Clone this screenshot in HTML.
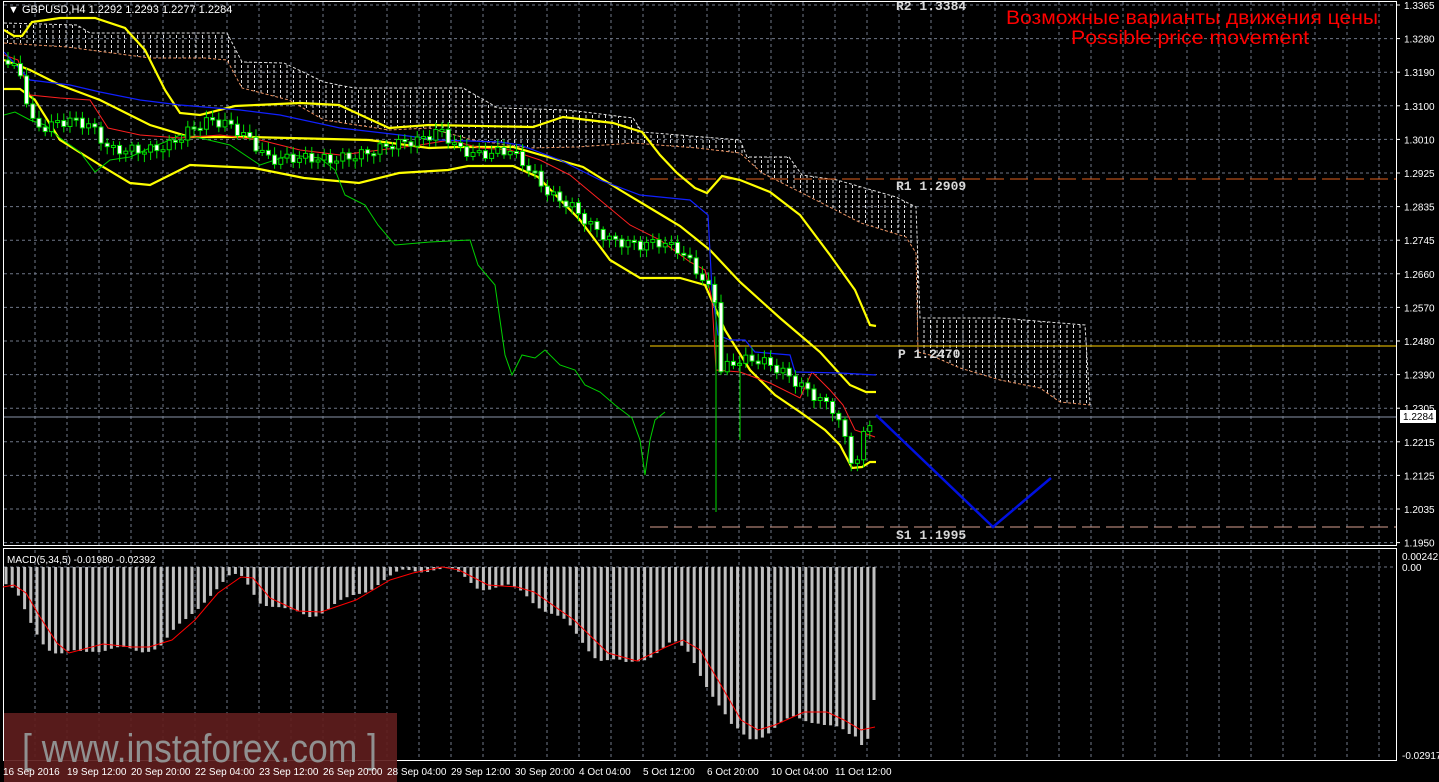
<!DOCTYPE html>
<html><head><meta charset="utf-8"><style>
html,body{margin:0;padding:0;background:#000;width:1439px;height:782px;overflow:hidden}
svg{display:block}
text{font-family:"Liberation Sans",sans-serif}
text.mono{font-family:"Liberation Mono",monospace}
</style></head><body>
<svg id="s" width="1439" height="782" viewBox="0 0 1439 782" xmlns="http://www.w3.org/2000/svg">
<defs>
<pattern id="hatch" width="6.5" height="5" patternUnits="userSpaceOnUse">
<line x1="1" y1="0" x2="1" y2="3" stroke="#e0e0e0" stroke-width="1"/>
</pattern>
<clipPath id="mc"><rect x="4" y="2" width="1393" height="543"/></clipPath>
</defs>
<g id="grid"></g>
<g clip-path="url(#mc)">
<polygon fill="url(#hatch)" points="4,23 77,25 90,33 227,33 242,62 284,63 324,82 354,88 463,88 498,108 568,110 633,118 642,132 740,140 747,157 789,157 802,175 837,180 896,197 916,207 920,318 1000,318 1085,325 1090,405 1060,402 1040,388 1000,380 960,368 930,355 918,352 916,253 906,237 861,223 802,193 762,173 740,153 697,148 633,143 578,147 528,148 473,140 429,128 389,130 324,120 289,100 242,88 227,60 205,58 150,58 67,47 4,43"/>
<polyline fill="none" stroke="#e89060" stroke-dasharray="3,2" points="4,43 67,47 150,58 205,58 227,60 242,88 289,100 324,120 389,130 429,128 473,140 528,148 578,147 633,143 697,148 740,153 762,173 802,193 861,223 906,237 916,253 918,352 930,355 960,368 1000,380 1040,388 1060,402 1090,405"/>
<polyline fill="none" stroke="#e0e0e0" stroke-dasharray="3,2" points="4,23 77,25 90,33 227,33 242,62 284,63 324,82 354,88 463,88 498,108 568,110 633,118 642,132 740,140 747,157 789,157 802,175 837,180 896,197 916,207 920,318 1000,318 1085,325 1090,405"/>
</g>
<line x1="650" y1="179" x2="1396" y2="179" stroke="#e0601e" stroke-dasharray="18,6"/>
<line x1="650" y1="346" x2="1396" y2="346" stroke="#ffd000"/>
<line x1="650" y1="527" x2="1396" y2="527" stroke="#d8a090" stroke-dasharray="18,6"/>
<line x1="4" y1="417" x2="1396" y2="417" stroke="#8a94a8"/>
<g font-size="13" font-weight="bold" fill="#d8d8d8">
<text class="mono" x="896" y="10">R2 1.3384</text>
<text class="mono" x="896" y="190">R1 1.2909</text>
<text class="mono" x="898" y="358">P 1.2470</text>
<text class="mono" x="896" y="539">S1 1.1995</text>
</g>
<g id="lines" clip-path="url(#mc)" fill="none">
<polyline stroke="#ffff00" stroke-width="2.2" points="4,30 14,36 22,36 32,22 60,18 95,18 125,28 145,50 165,90 180,113 200,115 235,106 300,103 339,105 389,128 429,125 533,127 563,117 613,123 642,132 660,155 677,173 695,188 707,193 722,176 740,180 770,192 800,215 830,255 855,290 870,325 876,326"/>
<polyline stroke="#ffff00" stroke-width="2.2" points="4,60 30,70 60,85 100,100 150,125 190,137 250,137 369,140 429,148 458,147 513,147 583,167 620,190 650,208 680,226 710,250 740,282 780,318 820,352 850,385 866,392 876,392"/>
<polyline stroke="#ffff00" stroke-width="2.2" points="4,89 20,89 35,100 60,140 100,165 130,183 150,185 190,165 254,168 304,178 359,183 399,173 448,170 468,166 513,166 538,177 580,220 610,260 640,278 680,278 705,285 725,330 750,370 775,395 800,412 825,430 840,445 852,468 862,467 870,462 876,462"/>
<polyline stroke="#00d000" stroke-width="1" points="4,115 15,112 30,120 45,125 60,138 80,152 95,172 110,160 130,157 150,148 165,142 180,135 200,138 230,145 260,165 290,155 320,158 335,170 345,195 365,205 378,225 395,245 430,242 470,240 478,265 495,285 505,355 512,375 522,355 535,358 545,350 560,365 575,370 585,385 600,392 615,405 632,418 640,440 645,475 650,440 655,420 665,412"/>
<polyline stroke="#ff2020" stroke-width="1" points="4,55 18,60 30,95 60,98 90,100 108,128 140,135 180,138 220,135 260,140 300,150 340,155 380,150 420,145 450,140 480,148 510,150 540,160 570,175 600,200 630,225 660,240 690,262 705,270 712,300 716,370 740,372 770,383 800,398 812,372 830,390 843,405 855,430 875,437"/>
<polyline stroke="#1020ff" stroke-width="1.2" points="4,52 30,80 70,85 100,92 140,100 180,105 240,110 280,115 340,128 400,135 440,140 500,142 520,145 560,160 600,180 640,195 690,200 708,215 712,290 718,335 730,340 745,340 755,352 790,355 795,372 840,373 876,375"/>
</g>
<g id="candles" clip-path="url(#mc)"></g>
<polyline fill="none" stroke="#0010e0" stroke-width="2.5" points="876,415 993,527 1051,478"/>
<rect x="3.5" y="1.5" width="1393" height="544" fill="none" stroke="#fff"/>
<rect x="3.5" y="548.5" width="1393" height="212" fill="none" stroke="#fff"/>
<g id="macd"></g>
<g id="axis" font-size="10" fill="#fff"></g>
<rect x="1400" y="410" width="36" height="13" fill="#fff"/>
<text x="1403" y="420" font-size="10" fill="#000">1.2284</text>
<text x="1402" y="560" font-size="10" fill="#fff">0.00242</text>
<text x="1402" y="571" font-size="10" fill="#fff">0.00</text>
<text x="1402" y="759" font-size="10" fill="#fff">-0.02917</text>
<text x="8" y="13" font-size="11" fill="#fff">▼  GBPUSD,H4  1.2292 1.2293 1.2277 1.2284</text>
<text x="7" y="563" font-size="10" fill="#fff">MACD(5,34,5) -0.01980 -0.02392</text>
<text x="1192" y="24" font-size="19" fill="#ff0000" text-anchor="middle" textLength="372" lengthAdjust="spacingAndGlyphs">Возможные варианты движения цены</text>
<text x="1190" y="44" font-size="19" fill="#ff0000" text-anchor="middle" textLength="238" lengthAdjust="spacingAndGlyphs">Possible price movement</text>
<rect x="4" y="713" width="393" height="69" fill="#5e1d1d" opacity="0.92"/>
<text x="22" y="762" font-size="40" fill="#909090" textLength="355" lengthAdjust="spacingAndGlyphs">[ www.instaforex.com ]</text>
<g id="dates" font-size="10" fill="#fff"></g>
</svg>
<script>
(function(){
var NS="http://www.w3.org/2000/svg";
function el(p,t,a){var e=document.createElementNS(NS,t);for(var k in a)e.setAttribute(k,a[k]);p.appendChild(e);return e;}
var g=document.getElementById('grid');
for(var i=0;i<17;i++){var y=5+i*33.6;el(g,'line',{x1:4,x2:1396,y1:y,y2:y,stroke:'#6f7788','stroke-dasharray':'3,3'});}
for(var x=35;x<1396;x+=32){el(g,'line',{x1:x,x2:x,y1:2,y2:545,stroke:'#6f7788','stroke-dasharray':'3,3'});el(g,'line',{x1:x,x2:x,y1:550,y2:760,stroke:'#6f7788','stroke-dasharray':'3,3'});}
el(g,'line',{x1:4,x2:1396,y1:567,y2:567,stroke:'#6f7788','stroke-dasharray':'3,3'});
var ax=document.getElementById('axis');
var pr=["1.3365","1.3280","1.3190","1.3100","1.3010","1.2925","1.2835","1.2745","1.2660","1.2570","1.2480","1.2390","1.2305","1.2215","1.2125","1.2035","1.1950"];
pr.forEach(function(p,i){var y=5+i*33.6;el(ax,'line',{x1:1396,x2:1400,y1:y,y2:y,stroke:'#fff'});var t=el(ax,'text',{x:1404,y:y+4});t.textContent=p;});
var d=document.getElementById('dates');
var ds=["16 Sep 2016","19 Sep 12:00","20 Sep 20:00","22 Sep 04:00","23 Sep 12:00","26 Sep 20:00","28 Sep 04:00","29 Sep 12:00","30 Sep 20:00","4 Oct 04:00","5 Oct 12:00","6 Oct 20:00","10 Oct 04:00","11 Oct 12:00"];
ds.forEach(function(s,i){var t=el(d,'text',{x:3+i*64,y:775});t.textContent=s;});
function interp(pts,x){for(var i=1;i<pts.length;i++){if(x<=pts[i][0]){var a=pts[i-1],b=pts[i];return a[1]+(b[1]-a[1])*(x-a[0])/(b[0]-a[0]);}}return pts[pts.length-1][1];}
var cp=[[8,60],[20,75],[35,130],[50,125],[70,120],[90,125],[110,150],[130,150],[150,150],[170,145],[190,130],[210,120],[230,125],[250,140],[270,160],[290,158],[310,158],[330,160],[360,155],[390,145],[420,140],[440,130],[460,150],[480,155],[510,150],[530,170],[550,195],[570,205],[590,225],[610,240],[640,245],[660,242],[680,250],[700,275],[715,300],[720,370],[740,360],[760,360],[780,370],[800,385],[820,400],[835,410],[845,440],[855,470],[865,430],[875,412]];
var c=document.getElementById('candles');var prev=interp(cp,8);
for(var x=8;x<=876;x+=6.2){var cl=interp(cp,x)+Math.sin(x*1.7)*5;var o=prev;var tp=Math.min(o,cl),bt=Math.max(o,cl);if(bt-tp<2)bt=tp+2;
el(c,'line',{x1:x,x2:x,y1:tp-3-Math.abs(Math.sin(x))*5,y2:bt+3+Math.abs(Math.cos(x))*5,stroke:'#00e000'});
el(c,'rect',{x:x-2,y:tp,width:4,height:bt-tp,fill:(cl>o?'#fff':'#000'),stroke:'#00e000','stroke-width':1});prev=cl;}
el(c,'line',{x1:716,x2:716,y1:300,y2:512,stroke:'#00e000'});el(c,'line',{x1:740,x2:740,y1:360,y2:440,stroke:'#00e000'});
var sp=[[3,587],[14,585],[26,593],[40,617],[57,643],[69,653],[103,644],[132,647],[149,647],[172,640],[195,620],[218,593],[241,577],[253,578],[270,598],[298,611],[321,612],[356,600],[390,580],[413,573],[442,567],[459,570],[488,585],[517,587],[534,592],[574,620],[608,653],[637,661],[666,647],[683,640],[700,650],[718,680],[741,720],[758,730],[775,725],[804,712],[827,712],[844,720],[861,730],[875,727]];
var m=document.getElementById('macd');
for(var x=6;x<=876;x+=6.2){var v=interp(sp,x+10);v=567+(v-567)*1.05+Math.sin(x*0.9)*4;if(x>868)v=700;if(x>860&&x<866)v=745;if(v<567)v=567;
el(m,'rect',{x:x-1.5,y:567,width:3,height:Math.max(1,v-567),fill:'#c0c0c0'});}
var s="";sp.forEach(function(p){s+=p[0]+","+p[1]+" ";});
el(m,'polyline',{points:s,fill:'none',stroke:'#ff0000','stroke-width':1});
})();
</script>
</body></html>
